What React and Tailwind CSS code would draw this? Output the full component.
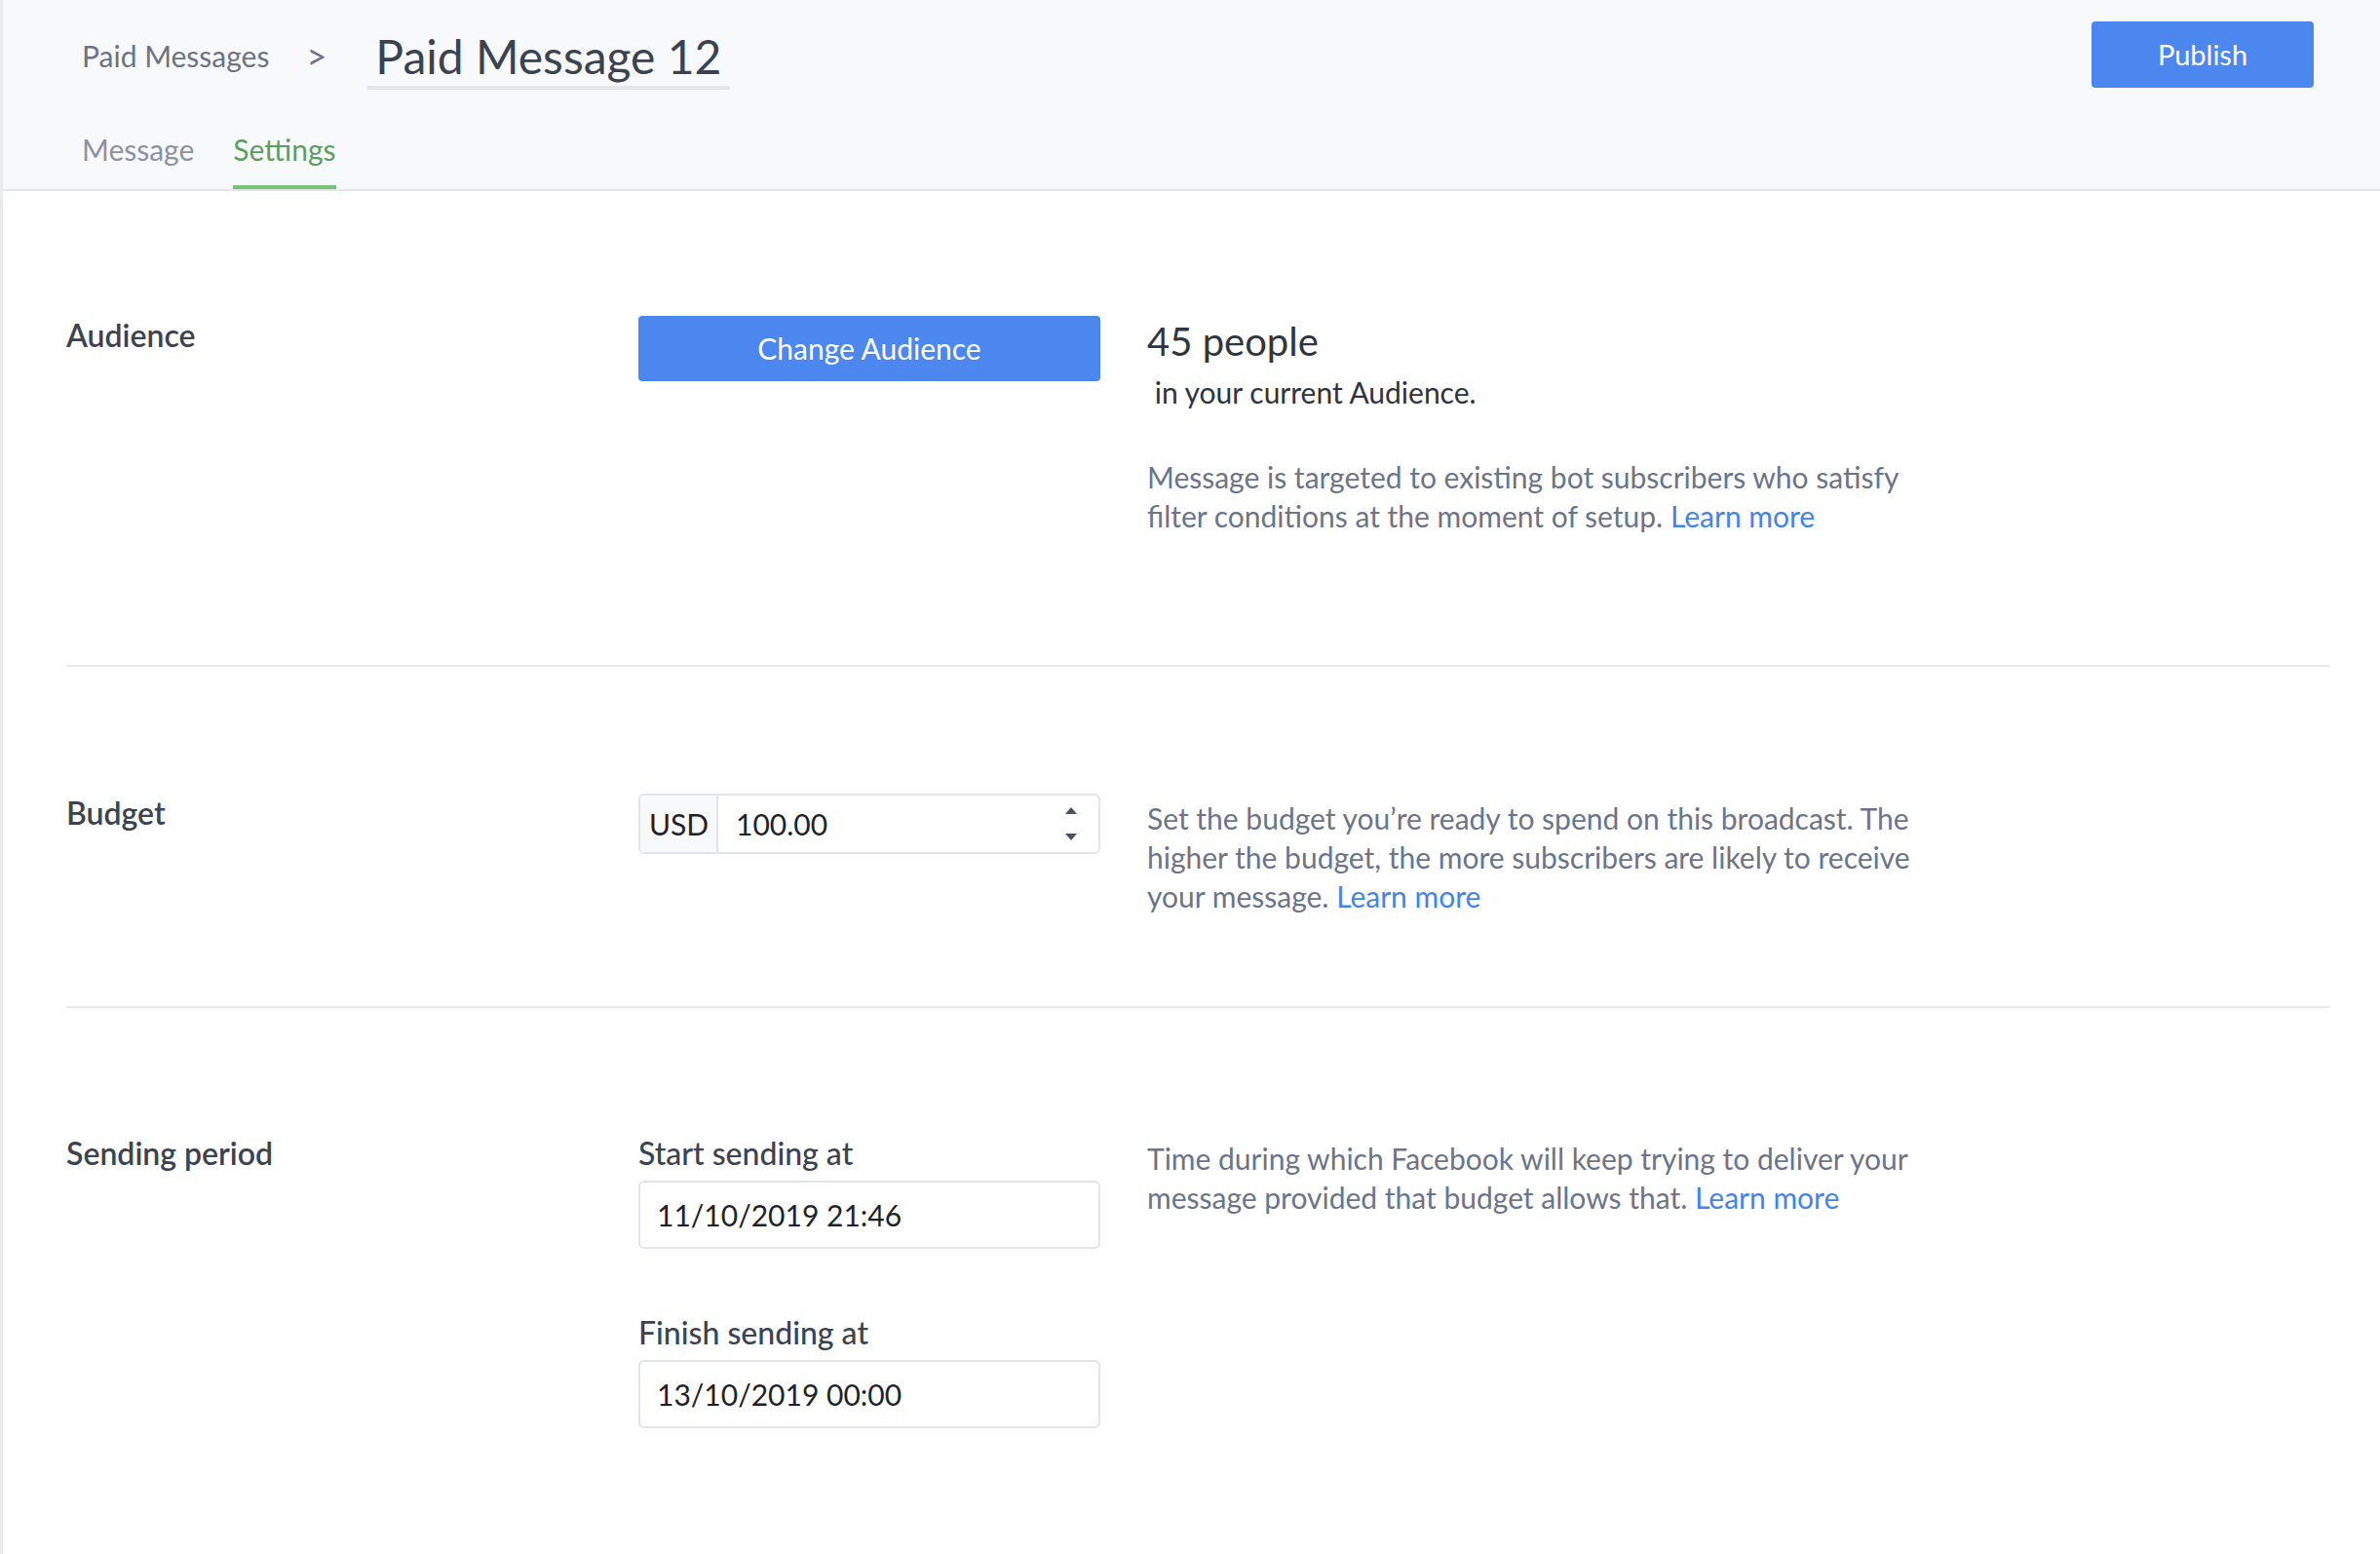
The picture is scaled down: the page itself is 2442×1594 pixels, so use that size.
import { useState } from 'react';

const Section = ({ label, children, aside, className }) => (
  <div className={`flex border-b-2 border-[#e6e8ec] ${className}`}>
    <div className="w-[587px] shrink-0 text-[32px] leading-[40px] font-semibold text-[#3b4351]">{label}</div>
    <div className="w-[474px] shrink-0">{children}</div>
    <div className="pl-[48px] w-[832px]">{aside}</div>
  </div>
);

const LearnMore = () => (
  <a href="#" className="text-[#4283ee]">Learn more</a>
);

const App = () => {
  const [budget, setBudget] = useState('100.00');
  const [start, setStart] = useState('11/10/2019 21:46');
  const [finish, setFinish] = useState('13/10/2019 00:00');

  return (
    <div className="min-h-screen bg-white flex font-['Lato',sans-serif]">
      {/* sidebar edge */}
      <div className="w-[3px] shrink-0 bg-[#e9ebef]" />

      <div className="flex-1">
        {/* Header */}
        <div className="h-[196px] bg-[#f8f9fb] border-b-2 border-[#e3e5ea] flex flex-col">
          <div className="flex items-start justify-between pl-[81px] pr-[68px] pt-[22px]">
            <div className="flex items-center h-[70px]">
              <span className="text-[30px] text-[#6b7385]">Paid Messages</span>
              <span className="text-[36px] text-[#6b7385] ml-[38px]">&gt;</span>
              <div className="ml-[42px] h-[70px] w-[372px] border-b-4 border-[#e3e5ea] flex items-center px-[8px] pt-[6px] whitespace-nowrap">
                <span className="text-[48px] leading-none text-[#3b4351]">Paid Message 12</span>
              </div>
            </div>
            <button className="w-[228px] h-[68px] rounded-[4px] bg-[#4b87ee] text-white text-[29px]">
              Publish
            </button>
          </div>
          <div className="flex gap-[40px] pl-[81px] mt-auto">
            <div className="text-[30px] leading-[40px] text-[#8a93a5] pb-[21px]">Message</div>
            <div className="text-[30px] leading-[40px] text-[#5c9e5f] pb-[17px] border-b-4 border-[#76c27a]">Settings</div>
          </div>
        </div>

        {/* Body */}
        <div className="pl-[65px] pr-[52px]">
          <Section
            label="Audience"
            className="pt-[128px] pb-[133px]"
            aside={
              <div>
                <div className="text-[40px] leading-[52px] text-[#2f3541]">45 people</div>
                <div className="mt-[6px] text-[30px] leading-[40px] text-[#2d3340]">&nbsp;in your current Audience.</div>
                <p className="mt-[47px] text-[30px] leading-[40px] text-[#6b7489]">
                  Message is targeted to existing bot subscribers who satisfy filter conditions at the moment of setup.{' '}
                  <LearnMore />
                </p>
              </div>
            }
          >
            <button className="w-full h-[67px] rounded-[4px] bg-[#4b87ee] text-white text-[30px]">
              Change Audience
            </button>
          </Section>

          <Section
            label="Budget"
            className="pt-[130px] pb-[93px]"
            aside={
              <p className="mt-[5px] text-[30px] leading-[40px] text-[#6b7489]">
                Set the budget you’re ready to spend on this broadcast. The higher the budget, the more subscribers are likely to receive your message.{' '}
                <LearnMore />
              </p>
            }
          >
            <div className="flex h-[62px] border-2 border-[#e1e4e9] rounded-[6px]">
              <div className="w-[80px] shrink-0 bg-[#f8f9fb] rounded-l-[4px] border-r-2 border-[#e1e4e9] flex items-center pl-[9px] text-[30px] text-[#1f2329]">
                USD
              </div>
              <input
                value={budget}
                onChange={(e) => setBudget(e.target.value)}
                className="w-[320px] pl-[18px] outline-none text-[30px] text-[#1f2329] bg-transparent"
              />
              <div className="w-[12px] ml-auto mr-[22px] flex flex-col justify-center gap-[20px] items-center">
                <div className="w-0 h-0 border-l-[6px] border-r-[6px] border-b-[7px] border-l-transparent border-r-transparent border-b-[#4a5160]" />
                <div className="w-0 h-0 border-l-[6px] border-r-[6px] border-t-[7px] border-l-transparent border-r-transparent border-t-[#4a5160]" />
              </div>
            </div>
          </Section>

          <Section
            label="Sending period"
            className="pt-[129px] pb-[130px] border-b-0"
            aside={
              <p className="mt-[5px] text-[30px] leading-[40px] text-[#6b7489]">
                Time during which Facebook will keep trying to deliver your message provided that budget allows that.{' '}
                <LearnMore />
              </p>
            }
          >
            <div className="text-[32px] leading-[40px] font-medium text-[#3b4351]">Start sending at</div>
            <input
              value={start}
              onChange={(e) => setStart(e.target.value)}
              className="mt-[8px] w-full h-[70px] border-2 border-[#e1e4e9] rounded-[6px] px-[17px] text-[30px] text-[#1f2329] outline-none"
            />
            <div className="mt-[66px] text-[32px] leading-[40px] font-medium text-[#3b4351]">Finish sending at</div>
            <input
              value={finish}
              onChange={(e) => setFinish(e.target.value)}
              className="mt-[8px] w-full h-[70px] border-2 border-[#e1e4e9] rounded-[6px] px-[17px] text-[30px] text-[#1f2329] outline-none"
            />
          </Section>
        </div>
      </div>
    </div>
  );
};

export default App;
